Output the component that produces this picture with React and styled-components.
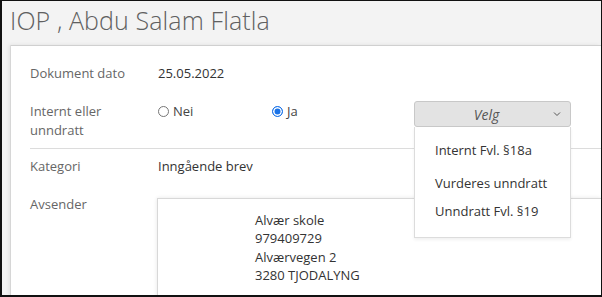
import React from 'react'
import styled, { createGlobalStyle } from 'styled-components'

const GlobalStyle = createGlobalStyle`
  html, body {
    margin: 0;
    padding: 0;
    background: #fff;
  }
  body {
    font-family: "Open Sans", "Liberation Sans", sans-serif;
    overflow: hidden;
  }
`

const Frame = styled.div`
  width: 602px;
  height: 297px;
  box-sizing: border-box;
  border-style: solid;
  border-color: #111;
  border-width: 1px 1px 2px 2px;
  background: #f3f3f3;
  display: flex;
  flex-direction: column;
  overflow: hidden;
`

const Header = styled.header`
  height: 44px;
  flex: none;
  display: flex;
  align-items: center;
  padding-left: 8px;

  h1 {
    margin: 0;
    font-size: 25px;
    font-weight: 300;
    color: #606060;
    letter-spacing: 0.1px;
    position: relative;
    top: -3px;
  }
`

const Panel = styled.section`
  flex: 1;
  margin-left: 9px;
  background: #fff;
  border-top: 1px solid #d0d0d0;
  box-shadow: -2px 0 4px rgba(0, 0, 0, 0.08), -1px 0 0 #e4e4e4;
  padding: 18px 0 0 19px;
  display: flex;
  flex-direction: column;
  font-size: 13px;
  line-height: 19px;
`

const Row = styled.div`
  display: grid;
  grid-template-columns: 128px 1fr;
  padding-top: ${p => p.$top || 0}px;
  padding-bottom: ${p => p.$bottom || 0}px;
  border-bottom: ${p => (p.$divider ? '1px solid #dcdcdc' : 'none')};
`

const Label = styled.div`
  color: #666;
`

const Value = styled.div`
  color: #333;
  display: flex;
  align-items: flex-start;
`

const RadioOption = styled.label`
  display: flex;
  align-items: center;
  gap: 4px;
  width: ${p => p.$width}px;
  color: #444;
  height: 19px;
`

const RadioDot = styled.span`
  width: 11px;
  height: 11px;
  border-radius: 50%;
  box-sizing: border-box;
  border: 1px solid ${p => (p.$checked ? '#1a73e8' : '#767676')};
  background: ${p => (p.$checked ? '#1a73e8' : '#fff')};
  box-shadow: ${p => (p.$checked ? 'inset 0 0 0 1.5px #fff' : 'none')};
  flex: none;
`

const SelectWrap = styled.div`
  position: relative;
  margin-left: 30px;
  margin-top: -1px;
  width: 157px;
`

const SelectButton = styled.div`
  height: 26px;
  box-sizing: border-box;
  padding-right: 12px;
  background: #e3e3e3;
  border: 1px solid #c8c8c8;
  border-radius: 3px;
  display: flex;
  align-items: center;
  justify-content: center;
  position: relative;
  color: #555;
  font-style: italic;
  font-size: 14px;

  svg {
    position: absolute;
    right: 9px;
    top: 9px;
  }
`

const Menu = styled.ul`
  position: absolute;
  top: 26px;
  left: 0;
  width: 157px;
  box-sizing: border-box;
  margin: 0;
  padding: 14px 0 16px 20px;
  list-style: none;
  background: #fff;
  border: 1px solid #dcdcdc;
  border-top: none;
  box-shadow: 0 2px 3px rgba(0, 0, 0, 0.06);
  z-index: 2;
`

const MenuItem = styled.li`
  color: #333;
  font-size: 13px;
  line-height: 19px;
  margin-bottom: ${p => p.$gap}px;
`

const AddressBox = styled.div`
  margin-top: 3px;
  margin-left: -1px;
  border: 1px solid #d8d8d8;
  border-right: none;
  box-shadow: 0 0 4px rgba(0, 0, 0, 0.1);
  padding: 12px 0 40px 97px;
  flex: 1;
  color: #333;
  line-height: 18.4px;
`

const Sender = styled.div`
  display: grid;
  grid-template-columns: 128px 1fr;
  padding-top: 19px;
`

export default function App () {
  return (
    <>
      <GlobalStyle />
      <Frame>
        <Header>
          <h1>IOP , Abdu Salam Flatla</h1>
        </Header>
        <Panel>
          <Row>
            <Label>Dokument dato</Label>
            <Value>25.05.2022</Value>
          </Row>
          <Row $top={19} $bottom={8} $divider>
            <Label>Internt eller<br />unndratt</Label>
            <Value>
              <RadioOption $width={114}>
                <RadioDot />
                Nei
              </RadioOption>
              <RadioOption $width={112}>
                <RadioDot $checked />
                Ja
              </RadioOption>
              <SelectWrap>
                <SelectButton>
                  Velg
                  <svg width="8" height="6" viewBox="0 0 8 6" fill="none">
                    <path d="M1 1.5 L4 4.5 L7 1.5" stroke="#555" strokeWidth="1" />
                  </svg>
                </SelectButton>
                <Menu>
                  <MenuItem $gap={14}>Internt Fvl. §18a</MenuItem>
                  <MenuItem $gap={9}>Vurderes unndratt</MenuItem>
                  <MenuItem $gap={0}>Unndratt Fvl. §19</MenuItem>
                </Menu>
              </SelectWrap>
            </Value>
          </Row>
          <Row $top={8}>
            <Label>Kategori</Label>
            <Value>Inngående brev</Value>
          </Row>
          <Sender>
            <Label>Avsender</Label>
            <AddressBox>
              Alvær skole<br />
              979409729<br />
              Alværvegen 2<br />
              3280 TJODALYNG
            </AddressBox>
          </Sender>
        </Panel>
      </Frame>
    </>
  )
}
